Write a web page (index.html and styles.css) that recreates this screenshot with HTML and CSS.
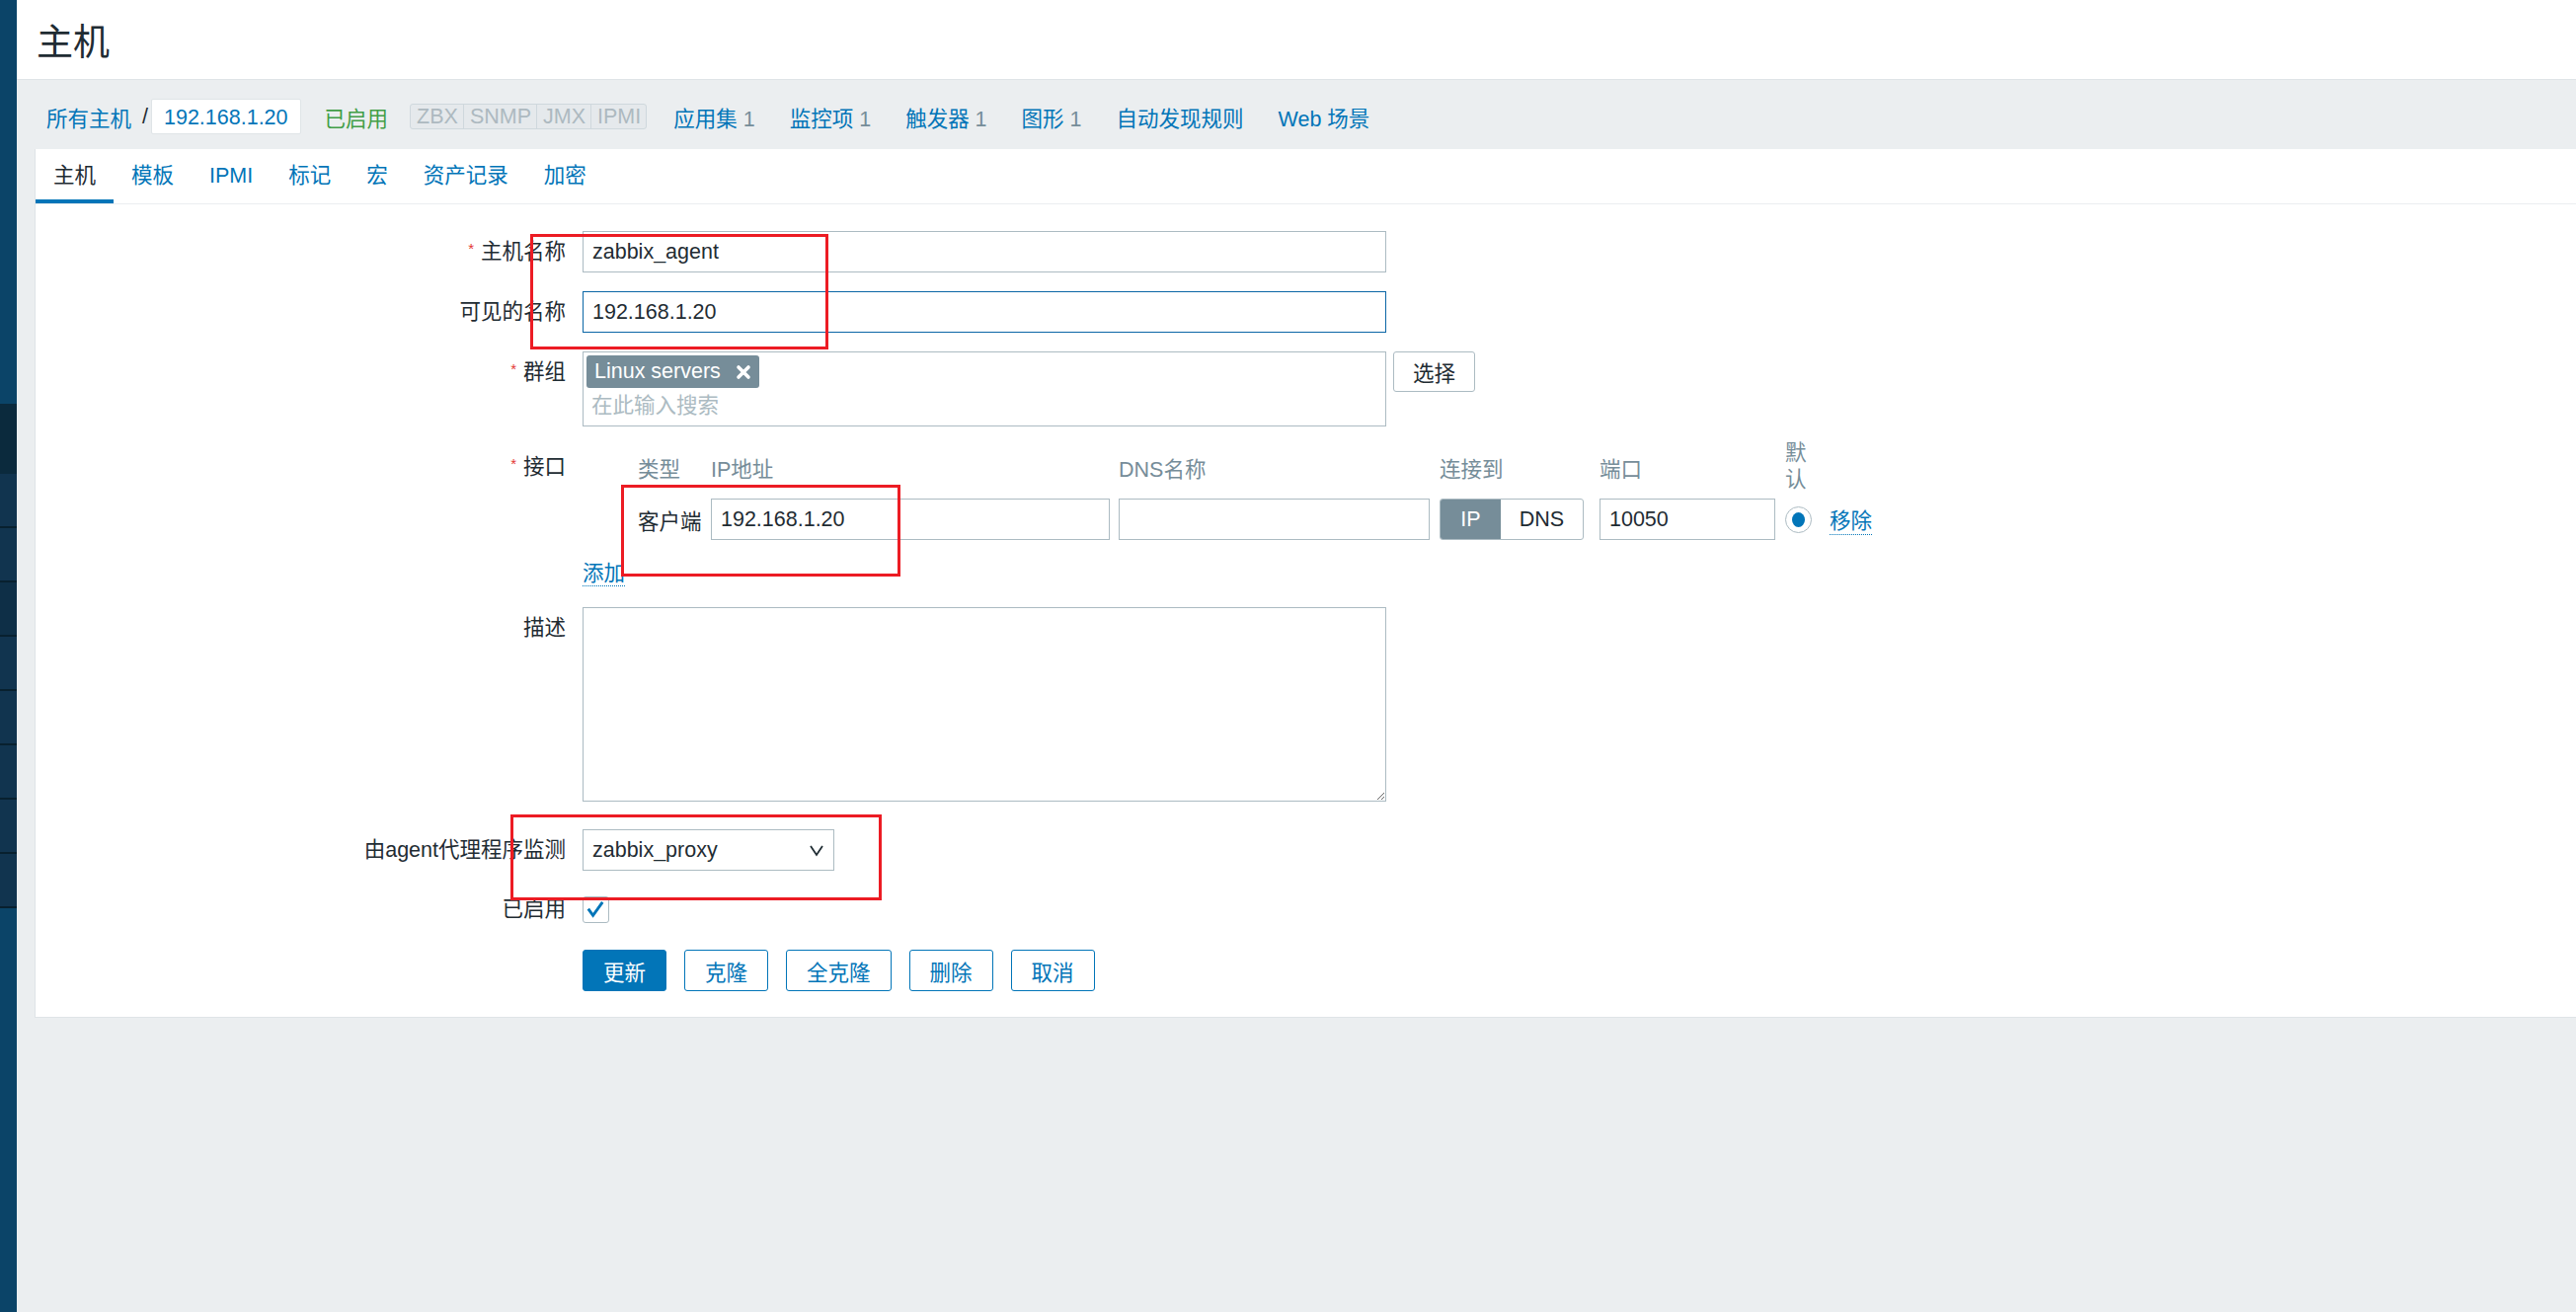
FILE: index.html
```html
<!DOCTYPE html>
<html lang="zh-CN">
<head>
    <meta charset="UTF-8">
    <title>主机</title>
    <link rel="stylesheet" href="styles.css">
</head>
<body>
    <div class="layout">
        <!-- Collapsed side menu -->
        <aside class="sidebar">
            <div class="sidebar-top"></div>
            <div class="sidebar-dark"></div>
            <div class="sidebar-seg"></div>
            <div class="sidebar-seg"></div>
            <div class="sidebar-seg sidebar-seg-dim"></div>
            <div class="sidebar-seg"></div>
            <div class="sidebar-seg"></div>
            <div class="sidebar-seg"></div>
            <div class="sidebar-seg"></div>
            <div class="sidebar-seg"></div>
        </aside>

        <main class="main">
            <header class="page-header">
                <h1>主机</h1>
            </header>

            <!-- Host navigation -->
            <nav class="host-nav">
                <a class="nav-link" href="#">所有主机</a>
                <span class="nav-sep">/</span>
                <span class="nav-current">192.168.1.20</span>
                <span class="nav-status">已启用</span>
                <span class="avail-group">
                    <span>ZBX</span><span>SNMP</span><span>JMX</span><span>IPMI</span>
                </span>
                <a class="nav-link nav-item nav-first" href="#">应用集 <span class="count">1</span></a>
                <a class="nav-link nav-item" href="#">监控项 <span class="count">1</span></a>
                <a class="nav-link nav-item" href="#">触发器 <span class="count">1</span></a>
                <a class="nav-link nav-item" href="#">图形 <span class="count">1</span></a>
                <a class="nav-link nav-item" href="#">自动发现规则</a>
                <a class="nav-link nav-item" href="#">Web 场景</a>
            </nav>

            <div class="panel">
                <ul class="tabs">
                    <li class="tab active">主机</li>
                    <li class="tab">模板</li>
                    <li class="tab">IPMI</li>
                    <li class="tab">标记</li>
                    <li class="tab">宏</li>
                    <li class="tab">资产记录</li>
                    <li class="tab">加密</li>
                </ul>

                <form class="host-form">
                    <div class="form-row">
                        <label class="form-label"><span class="req">*</span>主机名称</label>
                        <div class="form-field">
                            <input class="text-input wide" type="text" value="zabbix_agent">
                        </div>
                    </div>

                    <div class="form-row">
                        <label class="form-label">可见的名称</label>
                        <div class="form-field">
                            <input class="text-input wide focused" type="text" value="192.168.1.20">
                        </div>
                    </div>

                    <div class="form-row">
                        <label class="form-label"><span class="req">*</span>群组</label>
                        <div class="form-field field-inline">
                            <div class="multiselect">
                                <span class="chip">Linux servers
                                    <svg class="chip-x" viewBox="0 0 16 16">
                                        <path d="M3 3L13 13M13 3L3 13" />
                                    </svg>
                                </span>
                                <div class="placeholder">在此输入搜索</div>
                            </div>
                            <button class="btn-grey" type="button">选择</button>
                        </div>
                    </div>

                    <div class="form-row row-interface">
                        <label class="form-label label-iface"><span class="req">*</span>接口</label>
                        <div class="form-field">
                            <div class="iface">
                                <span></span>
                                <span class="iface-head">类型</span>
                                <span class="iface-head">IP地址</span>
                                <span class="iface-head">DNS名称</span>
                                <span class="iface-head">连接到</span>
                                <span class="iface-head">端口</span>
                                <span class="iface-head iface-default">默认</span>
                                <span></span>

                                <span></span>
                                <span>客户端</span>
                                <input class="text-input ip-input" type="text" value="192.168.1.20">
                                <input class="text-input dns-input" type="text" value="">
                                <span class="toggle"><span class="toggle-on">IP</span><span class="toggle-off">DNS</span></span>
                                <input class="text-input port-input" type="text" value="10050">
                                <span class="radio"><span class="radio-dot"></span></span>
                                <a class="dotted-link" href="#">移除</a>
                            </div>
                            <div class="add-line"><a class="dotted-link" href="#">添加</a></div>
                        </div>
                    </div>

                    <div class="form-row row-desc">
                        <label class="form-label">描述</label>
                        <div class="form-field">
                            <textarea class="textarea"></textarea>
                        </div>
                    </div>

                    <div class="form-row row-proxy">
                        <label class="form-label">由agent代理程序监测</label>
                        <div class="form-field">
                            <div class="select">
                                <span>zabbix_proxy</span>
                                <svg class="chevron" viewBox="0 0 16 16">
                                    <polyline points="2,4 8,13 14,4" />
                                </svg>
                            </div>
                        </div>
                    </div>

                    <div class="form-row row-check">
                        <label class="form-label label-check">已启用</label>
                        <div class="form-field">
                            <span class="checkbox">
                                <svg viewBox="0 0 26 26">
                                    <polyline points="5,12 10,19 20,5" />
                                </svg>
                            </span>
                        </div>
                    </div>

                    <div class="form-row row-buttons">
                        <span class="form-label"></span>
                        <div class="form-field buttons">
                            <button class="btn btn-main" type="button">更新</button>
                            <button class="btn" type="button">克隆</button>
                            <button class="btn" type="button">全克隆</button>
                            <button class="btn" type="button">删除</button>
                            <button class="btn" type="button">取消</button>
                        </div>
                    </div>
                </form>
            </div>
        </main>
    </div>

    <!-- Red annotation frames drawn over the screenshot -->
    <div class="mark mark-name"></div>
    <div class="mark mark-ip"></div>
    <div class="mark mark-proxy"></div>
</body>
</html>
```

FILE: styles.css
```css
/* Global styles */
:root {
    --link: #0275b8;
    --text: #1f2c33;
    --grey: #768d99;
    --border: #acbbc2;
    --light-border: #dfe4e7;
    --page-bg: #ebeef0;
}

* {
    box-sizing: border-box;
}

html,
body {
    height: 100%;
}

body {
    margin: 0;
    position: relative;
    overflow: hidden;
    font-family: "Liberation Sans", "Noto Sans CJK SC", sans-serif;
    font-size: 21.5px;
    color: var(--text);
    background-color: var(--page-bg);
}

a {
    color: var(--link);
    text-decoration: none;
}

.layout {
    display: flex;
    min-height: 100%;
}

/* Sidebar */
.sidebar {
    width: 17px;
    flex-shrink: 0;
    display: flex;
    flex-direction: column;
    background-color: #0b4468;
}

.sidebar-top {
    height: 409px;
}

.sidebar-dark {
    height: 71px;
    background-color: #0b2a3d;
}

.sidebar-seg {
    height: 55px;
    background-color: #11344f;
    border-bottom: 2px solid #08202f;
}

.sidebar-seg-dim {
    background-color: #0e2f47;
}

.main {
    flex: 1;
    min-width: 0;
}

/* Header */
.page-header {
    height: 81px;
    display: flex;
    align-items: center;
    padding-left: 20px;
    background-color: #fff;
    border-bottom: 1px solid var(--light-border);
}

.page-header h1 {
    margin: 0;
    font-size: 37px;
    font-weight: normal;
}

/* Host navigation */
.host-nav {
    height: 70px;
    display: flex;
    align-items: center;
    padding: 4px 0 0 30px;
    white-space: nowrap;
}

.nav-sep {
    margin: 0 3px 0 11px;
}

.nav-current {
    height: 36px;
    line-height: 36px;
    padding: 0 12px;
    color: var(--link);
    background-color: #fff;
    border: 1px solid var(--light-border);
    border-radius: 2px;
}

.nav-status {
    margin-left: 24px;
    color: #429e47;
}

.avail-group {
    display: flex;
    margin-left: 22px;
    background-color: #e5e9ec;
    border: 1px solid #cfd8dd;
    border-radius: 3px;
}

.avail-group span {
    padding: 0 5px 0 6px;
    line-height: 24px;
    color: #adb9c0;
}

.avail-group span + span {
    border-left: 1px solid #cfd8dd;
}

.nav-item {
    margin-left: 35px;
}

.nav-first {
    margin-left: 27px;
}

.count {
    color: var(--grey);
}

/* Panel & tabs */
.panel {
    margin-left: 18px;
    padding-bottom: 26px;
    background-color: #fff;
    border-left: 1px solid var(--light-border);
    border-bottom: 1px solid var(--light-border);
}

.tabs {
    display: flex;
    margin: 0;
    padding: 0;
    list-style: none;
    border-bottom: 1px solid var(--page-bg);
}

.tab {
    padding: 4px 18px 0;
    line-height: 47px;
    color: var(--link);
    border-bottom: 4px solid transparent;
}

.tab.active {
    color: var(--text);
    border-bottom-color: var(--link);
}

/* Form */
.host-form {
    padding-top: 27px;
}

.form-row {
    display: flex;
    align-items: flex-start;
}

.form-row + .form-row {
    margin-top: 19px;
}

.form-row.row-interface {
    margin-top: 14px;
}

.form-row.row-proxy {
    margin-top: 28px;
}

.form-row.row-check {
    margin-top: 26px;
}

.form-row.row-buttons {
    margin-top: 27px;
}

.form-label {
    width: 554px;
    flex-shrink: 0;
    padding-right: 17px;
    text-align: right;
    line-height: 42px;
    white-space: nowrap;
}

.label-iface {
    line-height: 54px;
}

.label-check {
    line-height: 27px;
}

.req {
    color: #e33734;
    font-size: 15px;
    line-height: 0;
    vertical-align: 5px;
    margin-right: 7px;
}

.field-inline {
    display: flex;
    align-items: flex-start;
    gap: 7px;
}

.text-input {
    height: 42px;
    padding: 0 9px;
    font: inherit;
    color: var(--text);
    background-color: #fff;
    border: 1px solid var(--border);
    outline: none;
}

.text-input.wide {
    width: 814px;
}

.text-input.focused {
    border-color: #0b66a6;
}

/* Groups multiselect */
.multiselect {
    width: 814px;
    height: 76px;
    padding: 3px;
    border: 1px solid var(--border);
}

.chip {
    display: inline-flex;
    align-items: center;
    gap: 15px;
    height: 33px;
    padding: 0 8px;
    color: #fff;
    background-color: var(--grey);
    border-radius: 3px;
}

.chip-x {
    width: 16px;
    height: 16px;
    stroke: #fff;
    stroke-width: 3.6;
    stroke-linecap: round;
}

.placeholder {
    padding-left: 5px;
    line-height: 36px;
    color: var(--border);
}

.btn-grey {
    height: 41px;
    padding: 0 19px;
    font: inherit;
    color: var(--text);
    background-color: #fff;
    border: 1px solid var(--border);
    border-radius: 3px;
}

/* Interfaces table */
.iface {
    display: grid;
    grid-template-columns: 56px 74px 413px 325px 162px 188px 45px auto;
    grid-template-rows: 54px 42px;
    row-gap: 5px;
    align-items: center;
}

.iface-head {
    color: var(--grey);
}

.iface-default {
    width: 24px;
    line-height: 27px;
}

.ip-input {
    width: 404px;
}

.dns-input {
    width: 315px;
}

.port-input {
    width: 178px;
}

.toggle {
    display: flex;
    width: 146px;
    height: 42px;
    border: 1px solid var(--border);
    border-radius: 3px;
    overflow: hidden;
}

.toggle span {
    display: flex;
    align-items: center;
    justify-content: center;
}

.toggle-on {
    width: 61px;
    color: #fff;
    background-color: var(--grey);
}

.toggle-off {
    flex: 1;
}

.radio {
    width: 27px;
    height: 27px;
    display: flex;
    align-items: center;
    justify-content: center;
    border: 1px solid var(--border);
    border-radius: 50%;
}

.radio-dot {
    width: 13px;
    height: 15px;
    border-radius: 50%;
    background-color: var(--link);
}

.dotted-link {
    border-bottom: 1px dotted var(--link);
}

.add-line {
    margin-top: 19px;
    line-height: 30px;
}

.textarea {
    display: block;
    width: 814px;
    height: 197px;
    margin: 0;
    border: 1px solid var(--border);
}

/* Proxy select */
.select {
    display: flex;
    align-items: center;
    justify-content: space-between;
    width: 255px;
    height: 42px;
    padding: 0 9px 0 9px;
    border: 1px solid var(--border);
}

.chevron {
    width: 16px;
    height: 16px;
    fill: none;
    stroke: var(--text);
    stroke-width: 1.8;
}

.checkbox {
    display: block;
    width: 27px;
    height: 27px;
    border: 1px solid var(--border);
    border-radius: 3px;
}

.checkbox svg {
    display: block;
    width: 25px;
    height: 25px;
    fill: none;
    stroke: var(--link);
    stroke-width: 3;
}

/* Buttons */
.buttons {
    display: flex;
    gap: 18px;
}

.btn {
    height: 42px;
    padding: 0 20px;
    font: inherit;
    color: var(--link);
    background-color: #fff;
    border: 1px solid var(--link);
    border-radius: 3px;
}

.btn-main {
    color: #fff;
    background-color: var(--link);
}

/* Annotation frames */
.mark {
    position: absolute;
    border: 3px solid #ec1c24;
}

.mark-name {
    left: 537px;
    top: 237px;
    width: 302px;
    height: 117px;
}

.mark-ip {
    left: 629px;
    top: 491px;
    width: 283px;
    height: 93px;
}

.mark-proxy {
    left: 517px;
    top: 825px;
    width: 376px;
    height: 87px;
}
```
